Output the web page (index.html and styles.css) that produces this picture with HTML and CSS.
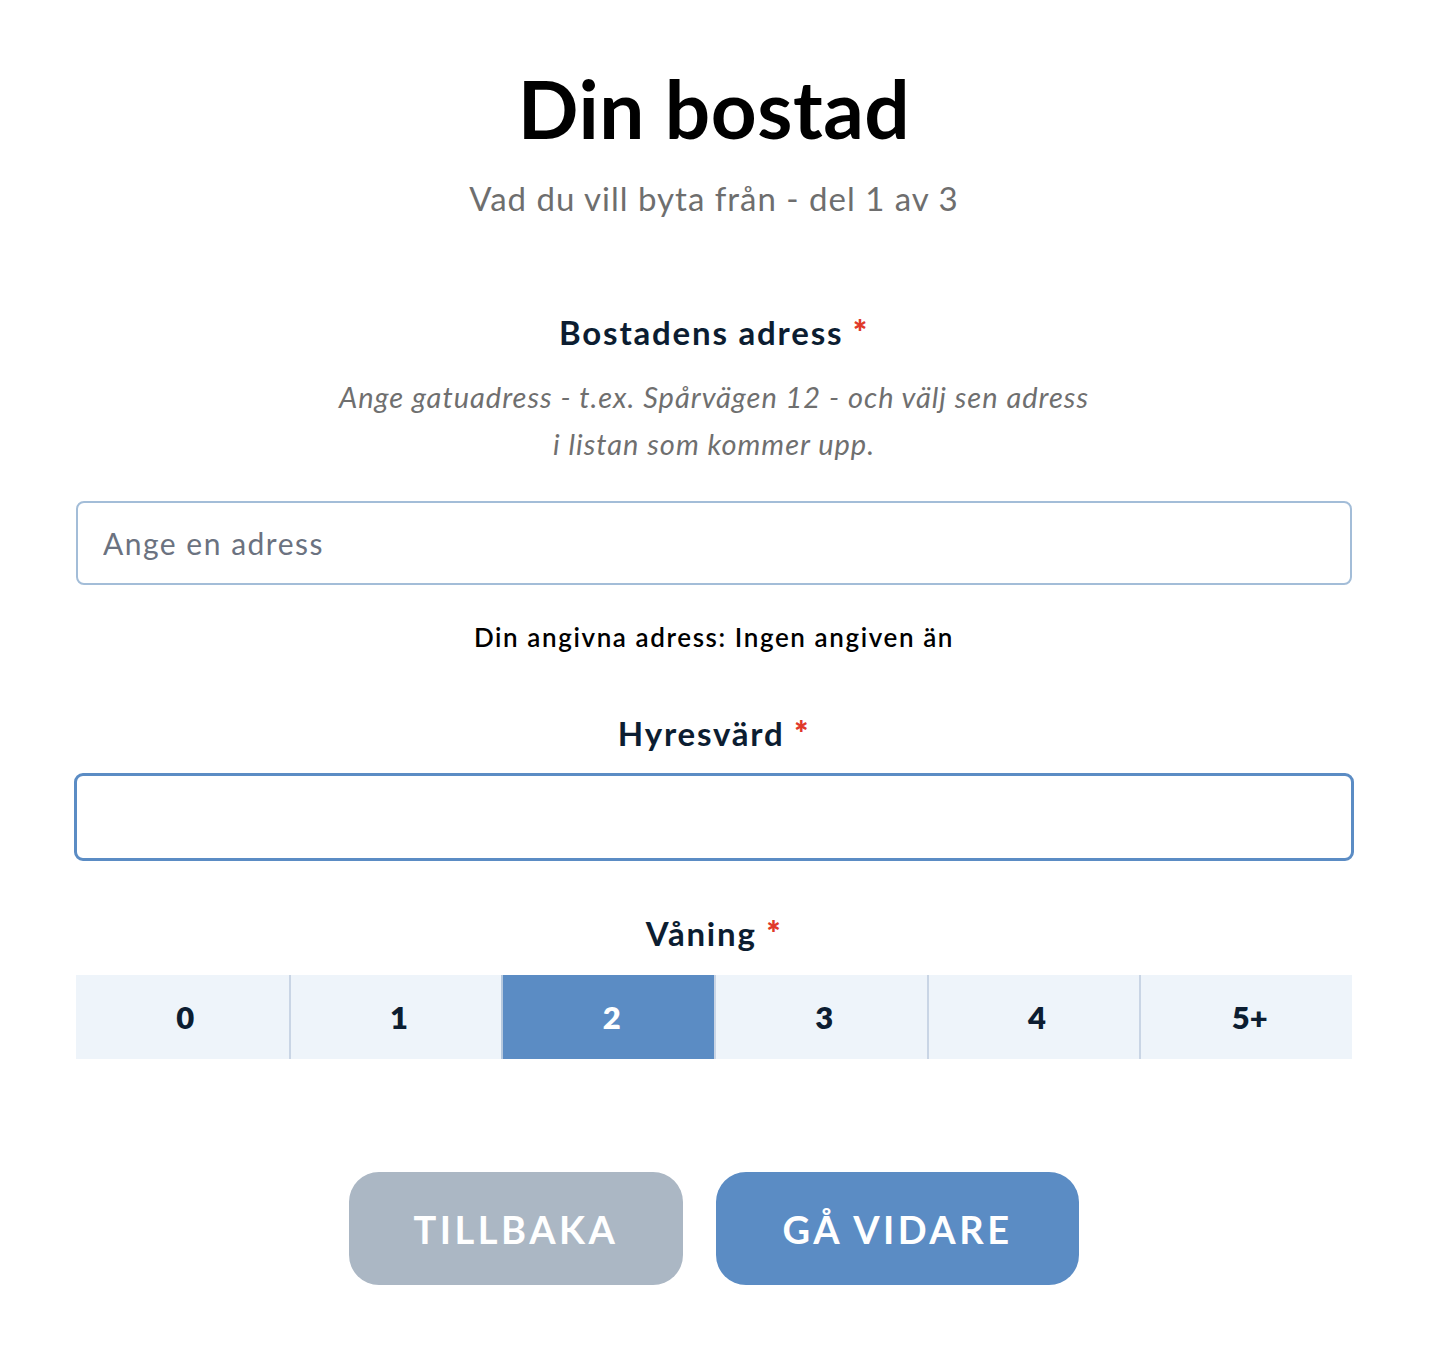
FILE: index.html
```html
<!DOCTYPE html>
<html lang="sv">
<head>
<meta charset="utf-8">
<title>Din bostad</title>
<link rel="stylesheet" href="styles.css">
</head>
<body>
<main class="page">
  <h1 class="title">Din bostad</h1>
  <p class="subtitle">Vad du vill byta från - del 1 av 3</p>

  <section class="field field-address">
    <h2 class="label">Bostadens adress <span class="req">*</span></h2>
    <p class="help">Ange gatuadress - t.ex. Spårvägen 12 - och välj sen adress<br>i listan som kommer upp.</p>
    <input class="input input-address" type="text" placeholder="Ange en adress">
    <p class="chosen">Din angivna adress: Ingen angiven än</p>
  </section>

  <section class="field field-landlord">
    <h2 class="label">Hyresvärd <span class="req">*</span></h2>
    <input class="input input-focus" type="text">
  </section>

  <section class="field field-floor">
    <h2 class="label">Våning <span class="req">*</span></h2>
    <div class="segments">
      <button class="seg">0</button>
      <button class="seg">1</button>
      <button class="seg seg-active">2</button>
      <button class="seg">3</button>
      <button class="seg">4</button>
      <button class="seg">5+</button>
    </div>
  </section>

  <div class="actions">
    <button class="btn btn-back">TILLBAKA</button>
    <button class="btn btn-next">GÅ VIDARE</button>
  </div>
</main>
</body>
</html>
```
FILE: styles.css
```css
* { box-sizing: border-box; }
html, body { margin: 0; padding: 0; background: #fff; }
body { font-family: "Lato", "Open Sans", sans-serif; color: #000; }

.page {
  width: 1276px;
  margin-left: 76px;
  display: flex;
  flex-direction: column;
  align-items: stretch;
  text-align: center;
}

.title {
  margin: 66px 0 0;
  font-size: 80px;
  line-height: 84px;
  font-weight: 700;
  letter-spacing: 0.5px;
}

.subtitle {
  margin: 28px 0 0;
  font-size: 33px;
  line-height: 40px;
  color: #6e6e6e;
  letter-spacing: 1px;
}

.field { display: flex; flex-direction: column; }
.field-address { margin-top: 94px; }
.field-landlord { margin-top: 60px; }
.field-floor { margin-top: 52px; }

.label {
  margin: 0;
  font-size: 33px;
  line-height: 40px;
  font-weight: 700;
  color: #0c1d31;
  letter-spacing: 1.8px;
}
.req { color: #e0392a; font-weight: 800; }

.help {
  margin: 21px 0 0;
  font-size: 29px;
  line-height: 47px;
  font-style: italic;
  color: #6f6f6f;
  letter-spacing: 1px;
}

.input {
  display: block;
  width: 100%;
  font-family: inherit;
  background: #fff;
  outline: none;
}
.input-address {
  margin-top: 34px;
  height: 84px;
  border: 2px solid #a3bdd8;
  border-radius: 8px;
  padding: 0 25px;
  font-size: 30px;
  color: #333;
  letter-spacing: 1.5px;
}
.input-address::placeholder { color: #6b7280; }

.chosen {
  margin: 36px 0 0;
  font-size: 26px;
  line-height: 32px;
  font-weight: 600;
  letter-spacing: 1.6px;
  color: #000;
}

.input-focus {
  margin: 20px -2px 0;
  width: calc(100% + 4px);
  height: 88px;
  border: 3px solid #5b8cc4;
  border-radius: 9px;
}

.segments {
  margin-top: 22px;
  display: grid;
  grid-template-columns: repeat(6, 1fr);
  height: 84px;
  background: #eef4fa;
}
.seg {
  border: 0;
  border-left: 2px solid #c9d5e5;
  background: #eef4fa;
  font-family: inherit;
  font-size: 31px;
  font-weight: 800;
  color: #0c1d31;
  padding: 0 0 0 6px;
}
.seg:first-child { border-left: 0; }
.seg-active { background: #5b8cc4; color: #fff; border-left-color: #b5c8de; }

.actions {
  margin-top: 113px;
  display: flex;
  justify-content: center;
  gap: 33px;
}
.btn {
  height: 113px;
  border: 0;
  border-radius: 30px;
  color: #fff;
  font-family: inherit;
  font-size: 38px;
  font-weight: 700;
  letter-spacing: 3.5px;
}
.btn-back { width: 334px; background: #abb7c4; }
.btn-next { width: 363px; background: #5b8cc4; }
```
